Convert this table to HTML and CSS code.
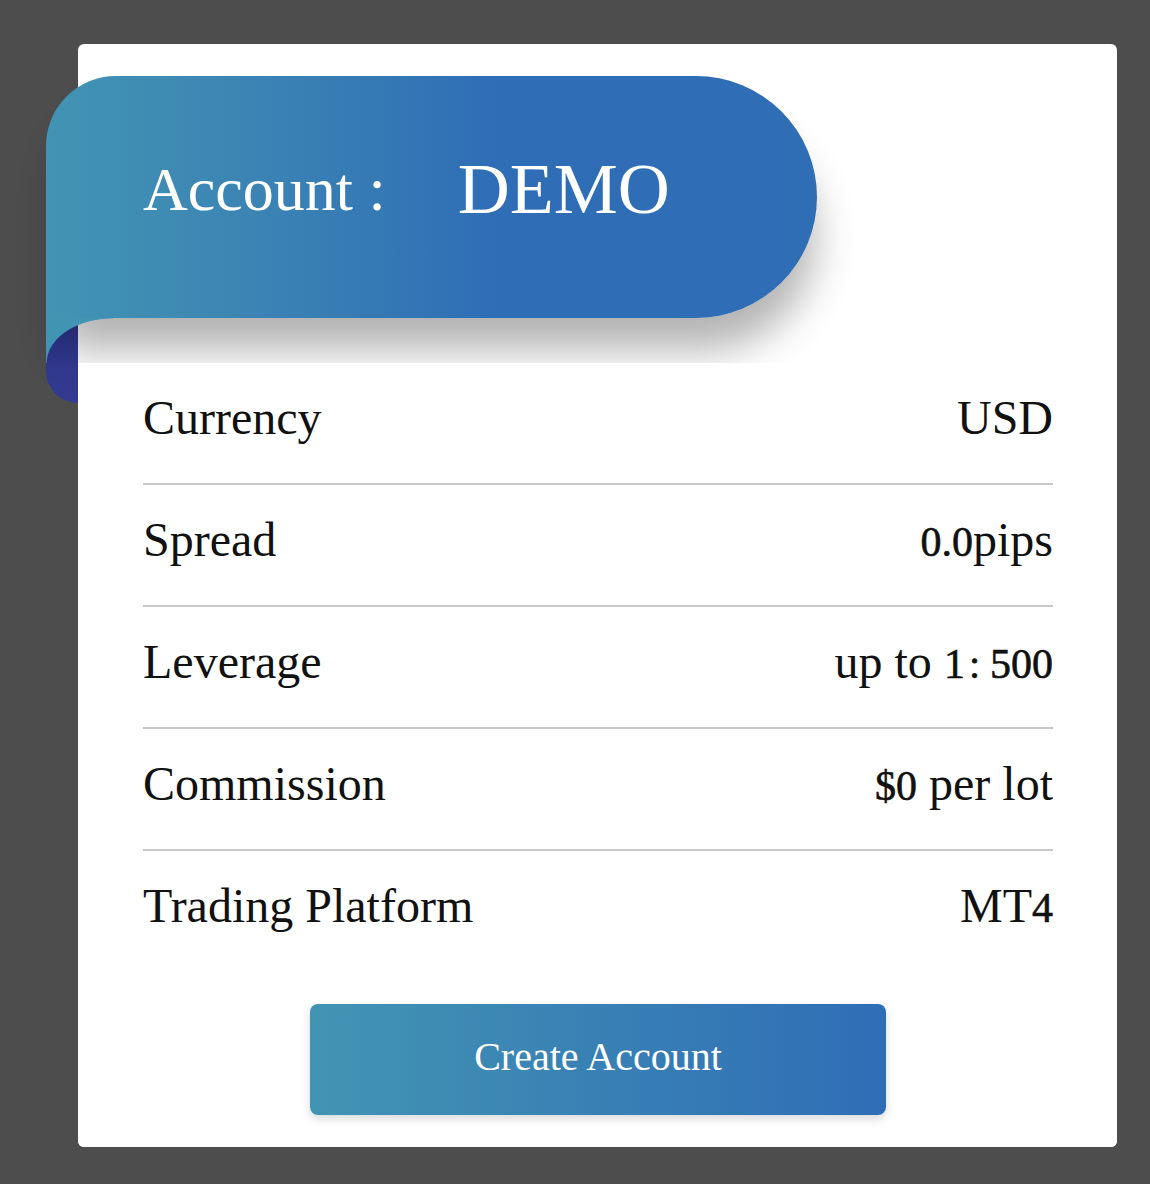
FILE: index.html
```html
<!DOCTYPE html>
<html lang="en">
<head>
  <meta charset="UTF-8" />
  <title>Account Type</title>
  <link rel="stylesheet" href="styles.css">
</head>
<body>
  <div class="card">
    <div class="ribbon">
      <span class="ribbon-label">Account :</span>
      <span class="ribbon-type">DEMO</span>
    </div>

    <div class="details">
      <div class="row">
        <span>Currency</span>
        <span>USD</span>
      </div>
      <div class="row">
        <span>Spread</span>
        <span><span class="num">0.0</span>pips</span>
      </div>
      <div class="row">
        <span>Leverage</span>
        <span>up to <span class="num">1</span><span class="colon">:</span><span class="num">500</span></span>
      </div>
      <div class="row">
        <span>Commission</span>
        <span><span class="num">$0</span> per lot</span>
      </div>
      <div class="row">
        <span>Trading Platform</span>
        <span>MT<span class="num">4</span></span>
      </div>

      <button class="create-btn">Create Account</button>
    </div>
  </div>
</body>
</html>
```

FILE: styles.css
```css
* {
  box-sizing: border-box;
}

body {
  font-family: 'Liberation Serif', 'Times New Roman', serif;
  background: #4d4d4d;
  margin: 0;
  padding: 44px 33px 37px 78px;
}

.card {
  background-color: #fff;
  border-radius: 6px;
  padding-top: 32px;
}

/* ribbon hanging over the left edge of the card */
.ribbon {
  position: relative;
  width: 771px;
  height: 242px;
  margin-left: -32px;
  margin-bottom: 45px;
  padding: 0 0 16px 97px;
  display: flex;
  align-items: center;
  color: #fff;
  border-radius: 70px 121px 121px 0;
  background: linear-gradient(to right, #4294b3 0%, #3a82b4 30%, #2f6eb6 58%, #2f6db5 100%);
  box-shadow: 6px 40px 40px -8px rgba(0, 0, 0, 0.3);
}

/* dark fold behind the card edge */
.ribbon::before {
  content: "";
  position: absolute;
  left: 0;
  top: 100%;
  width: 32px;
  height: 85px;
  border-bottom-left-radius: 32px;
  background: linear-gradient(#22266a, #30388d 60%, #323b91);
}

/* curl where the ribbon wraps round */
.ribbon::after {
  content: "";
  position: absolute;
  left: 0;
  top: 100%;
  width: 67px;
  height: 45px;
  background: radial-gradient(67px 45px at 100% 100%, transparent 98%, #4294b3 100%);
}

.ribbon-label {
  font-size: 62px;
}

.ribbon-type {
  font-size: 72px;
  margin-left: 72px;
}

.details {
  position: relative;
  background-color: #fff;
  border-radius: 0 0 6px 6px;
  padding: 0 64px 32px 65px;
}

.row {
  height: 122px;
  display: flex;
  align-items: center;
  justify-content: space-between;
  padding-bottom: 12px;
  font-size: 48px;
  color: #111;
  border-bottom: 2px solid #c8c8c8;
}

.row:last-of-type {
  height: 120px;
  border-bottom: none;
}

.num {
  font-size: 42px;
  -webkit-text-stroke: 0.6px #111;
}

.colon {
  font-size: 40px;
  margin: 0 10px 0 4px;
  -webkit-text-stroke: 0.6px #111;
}

.create-btn {
  display: block;
  width: 576px;
  height: 111px;
  margin: 33px auto 0;
  padding-bottom: 8px;
  border: none;
  border-radius: 8px;
  font-family: inherit;
  font-size: 40px;
  color: #fff;
  background: linear-gradient(to right, #4294b3, #2f6db6);
  box-shadow: 0 4px 10px rgba(0, 0, 0, 0.15);
  cursor: pointer;
}
```
